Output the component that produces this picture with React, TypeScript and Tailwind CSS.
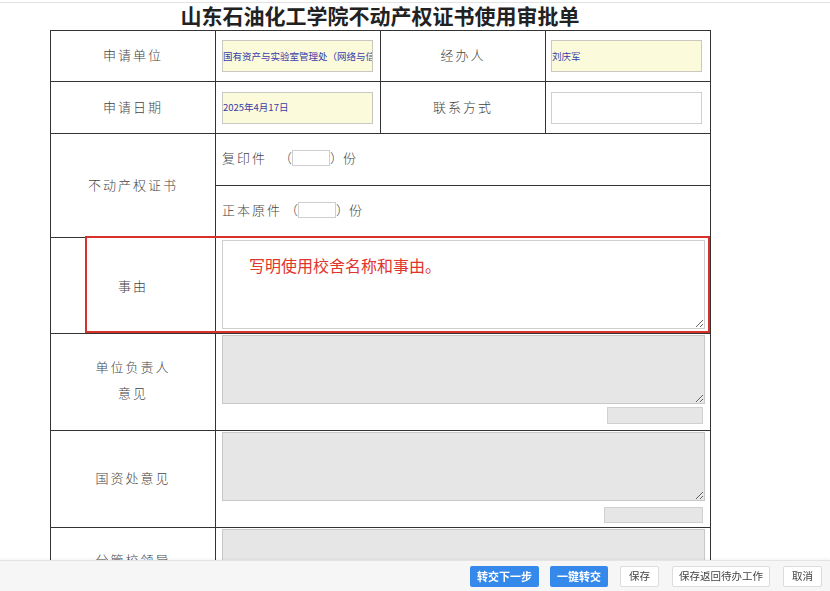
import React from "react";

const labelFont = { fontFamily: '"Noto Sans CJK SC", "Noto Sans", sans-serif' };

function Label({ children }: { children: React.ReactNode }) {
  return (
    <span className="text-[13px] font-light tracking-[2px] text-[#444]">{children}</span>
  );
}

function YellowInput({ value }: { value: string }) {
  return (
    <div className="flex h-[32px] w-[151px] items-center overflow-hidden whitespace-nowrap border border-[#c8c8c0] bg-[#fbfbdc] text-[9.5px] text-[#3a3aa8]">
      {value}
    </div>
  );
}

function ActionButton({
  children,
  primary,
  pad = "px-[8px]",
}: {
  children: React.ReactNode;
  primary?: boolean;
  pad?: string;
}) {
  return (
    <button
      className={
        primary
          ? "h-[21px] rounded-[2px] bg-[#3589ea] px-[7px] text-[11px] font-bold text-white"
          : `h-[21px] rounded-[2px] border border-[#dcdcdc] bg-white ${pad} text-[10.5px] text-[#444]`
      }
    >
      {children}
    </button>
  );
}

export default function App() {
  return (
    <div className="relative min-h-[591px] w-[830px] overflow-hidden bg-white" style={labelFont}>
      <div className="h-[3px] border-b border-[#e2e2e2]" />
      <div className="ml-[50px] w-[660px]">
        <h1
          className="h-[27px] text-center text-[21px] font-bold leading-[25px] text-[#222]"
          style={{ fontFamily: '"Noto Sans CJK SC", serif' }}
        >
          山东石油化工学院不动产权证书使用审批单
        </h1>

        <div className="relative">
          <table className="w-[660px] table-fixed border-collapse border border-[#333]">
            <colgroup>
              <col className="w-[165px]" />
              <col className="w-[165px]" />
              <col className="w-[165px]" />
              <col className="w-[165px]" />
            </colgroup>
            <tbody>
              <tr className="h-[51px]">
                <td className="border border-[#333] pb-[6px] text-center">
                  <Label>申请单位</Label>
                </td>
                <td className="border border-[#333] pl-[6px]">
                  <YellowInput value="国有资产与实验室管理处（网络与信息" />
                </td>
                <td className="border border-[#333] pb-[6px] text-center">
                  <Label>经办人</Label>
                </td>
                <td className="border border-[#333] pl-[5px]">
                  <YellowInput value="刘庆军" />
                </td>
              </tr>
              <tr className="h-[52px]">
                <td className="border border-[#333] pb-[6px] text-center">
                  <Label>申请日期</Label>
                </td>
                <td className="border border-[#333] pl-[6px]">
                  <YellowInput value="2025年4月17日" />
                </td>
                <td className="border border-[#333] pb-[6px] text-center">
                  <Label>联系方式</Label>
                </td>
                <td className="border border-[#333] pl-[5px]">
                  <div className="h-[32px] w-[151px] border border-[#cfcfcf] bg-white" />
                </td>
              </tr>
              <tr className="h-[52px]">
                <td rowSpan={2} className="border border-[#333] pb-[6px] text-center">
                  <Label>不动产权证书</Label>
                </td>
                <td colSpan={3} className="border border-[#333] pb-[4px] pl-[6px]">
                  <div className="flex items-center text-[13px] font-light text-[#444]">
                    <span className="tracking-[2px]">复印件</span>
                    <span className="ml-[12px]">（</span>
                    <span className="h-[16px] w-[38px] border border-[#cfcfcf] bg-white" />
                    <span>）份</span>
                  </div>
                </td>
              </tr>
              <tr className="h-[52px]">
                <td colSpan={3} className="border border-[#333] pb-[4px] pl-[6px]">
                  <div className="flex items-center text-[13px] font-light text-[#444]">
                    <span className="tracking-[2px]">正本原件</span>
                    <span className="ml-[3px]">（</span>
                    <span className="h-[16px] w-[38px] border border-[#cfcfcf] bg-white" />
                    <span>）份</span>
                  </div>
                </td>
              </tr>
              <tr className="h-[96px]">
                <td className="border border-[#333] pb-[4px] text-center">
                  <Label>事由</Label>
                </td>
                <td colSpan={3} className="border border-[#333] px-[6px] pt-[2px] align-top">
                  <textarea
                    className="block h-[89px] w-[483px] border border-[#cfcfcf] bg-white"
                    defaultValue=""
                  />
                </td>
              </tr>
              <tr className="h-[97px]">
                <td className="border border-[#333] pb-[6px] text-center">
                  <div className="leading-[25px]">
                    <Label>单位负责人</Label>
                    <br />
                    <Label>意见</Label>
                  </div>
                </td>
                <td colSpan={3} className="border border-[#333] px-[6px] pt-[1px] align-top">
                  <textarea
                    disabled
                    className="block h-[69px] w-[483px] border border-[#c8c8c8] bg-[#e6e6e6]"
                  />
                  <div className="mt-[3px] flex justify-end pr-[1px]">
                    <div className="h-[17px] w-[96px] border border-[#d0d0d0] bg-[#e6e6e6]" />
                  </div>
                </td>
              </tr>
              <tr className="h-[97px]">
                <td className="border border-[#333] pb-[6px] text-center">
                  <Label>国资处意见</Label>
                </td>
                <td colSpan={3} className="border border-[#333] px-[6px] pt-[1px] align-top">
                  <textarea
                    disabled
                    className="block h-[69px] w-[483px] border border-[#c8c8c8] bg-[#e6e6e6]"
                  />
                  <div className="mt-[6px] flex justify-end pr-[1px]">
                    <div className="h-[16px] w-[99px] border border-[#d0d0d0] bg-[#e6e6e6]" />
                  </div>
                </td>
              </tr>
              <tr className="h-[97px]">
                <td className="border border-[#333] pb-[8px] text-center">
                  <div className="leading-[25px]">
                    <Label>分管校领导</Label>
                    <br />
                    <Label>意见</Label>
                  </div>
                </td>
                <td colSpan={3} className="border border-[#333] px-[6px] pt-[1px] align-top">
                  <textarea
                    disabled
                    className="block h-[69px] w-[483px] border border-[#c8c8c8] bg-[#e6e6e6]"
                  />
                </td>
              </tr>
            </tbody>
          </table>

          {/* red annotation over 事由 row */}
          <div className="pointer-events-none absolute left-[35px] top-[206px] h-[97px] w-[625px] border-2 border-[#d6312a]">
            <span className="absolute left-[162px] top-[15px] text-[16px] text-[#e0352c]">
              写明使用校舍名称和事由。
            </span>
          </div>
        </div>
      </div>

      <div className="fixed bottom-0 left-0 flex h-[31px] w-[830px] items-center justify-end border-t border-[#e4e4e4] bg-[#f6f6f6] pr-[8px] shadow-[0_-1px_3px_rgba(0,0,0,0.05)]">
        <div className="flex items-center gap-[11px]">
          <ActionButton primary>转交下一步</ActionButton>
          <ActionButton primary>一键转交</ActionButton>
        </div>
        <div className="ml-[12px] flex items-center gap-[13px]">
          <ActionButton>保存</ActionButton>
          <ActionButton pad="px-[6px]">保存返回待办工作</ActionButton>
          <ActionButton>取消</ActionButton>
        </div>
      </div>
    </div>
  );
}
